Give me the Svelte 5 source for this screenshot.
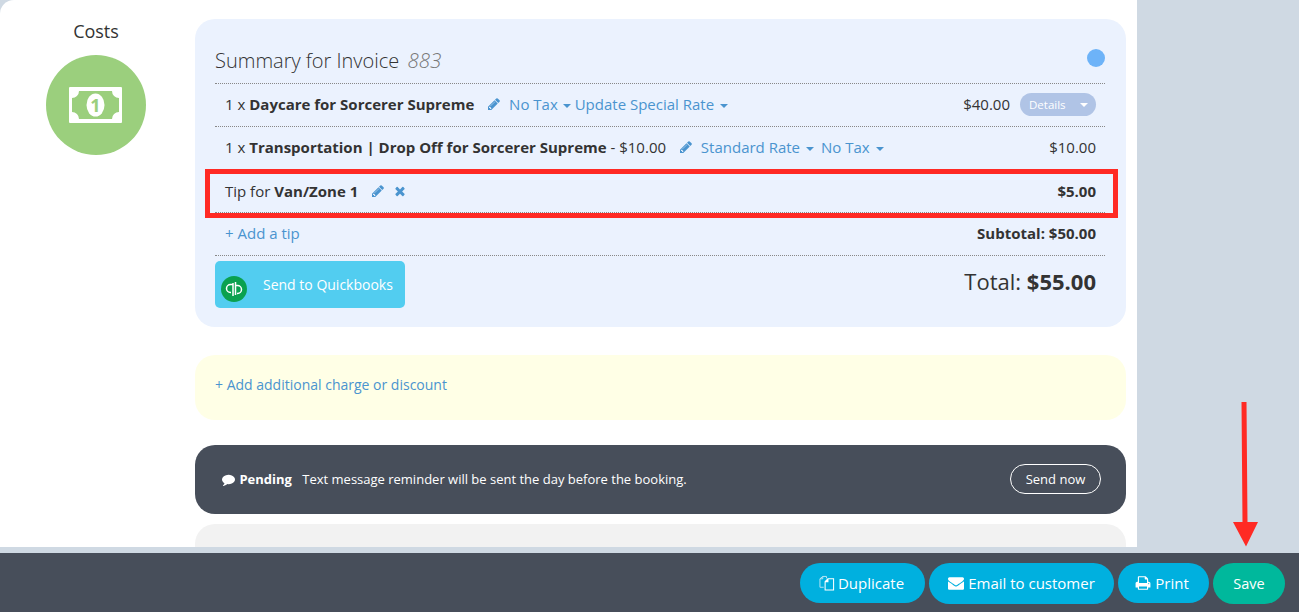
<script>
  const pencil = "M491 1536l91-91-235-235-91 91v107h128v128h107zm523-928q0-22-22-22-10 0-17 7l-542 542q-7 7-7 17 0 22 22 22 10 0 17-7l542-542q7-7 7-17zm-54-192l416 416-832 832h-416v-416zm683 96q0 53-37 90l-166 166-416-416 166-165q36-38 90-38 53 0 91 38l235 234q37 39 37 91z";
  const times = "M1490 1322q0 40-28 68l-136 136q-28 28-68 28t-68-28l-294-294-294 294q-28 28-68 28t-68-28l-136-136q-28-28-28-68t28-68l294-294-294-294q-28-28-28-68t28-68l136-136q28-28 68-28t68 28l294 294 294-294q28-28 68-28t68 28l136 136q28 28 28 68t-28 68l-294 294 294 294q28 28 28 68z";
  const envelope = "M1792 710v794q0 66-47 113t-113 47h-1472q-66 0-113-47t-47-113v-794q44 49 101 87 362 246 497 345 57 42 92.500 65.500t94.500 48 110 24.500h2q51 0 110-24.500t94.500-48 92.500-65.500q170-123 498-345 57-39 100-87zm0-294q0 79-49 151t-122 123q-376 261-468 325-10 7-42.500 30.500t-54 38-52 32.500-57.500 27-50 9h-2q-23 0-50-9t-57.500-27-52-32.500-54-38-42.500-30.500q-91-64-262-182.500t-205-142.500q-62-42-117-115.500t-55-136.500q0-78 41.500-130t118.500-52h1472q65 0 112.500 47t47.500 113z";
  const printer = "M448 1536h896v-256h-896v256zm0-640h896v-384h-160q-40 0-68-28t-28-68v-160h-640v640zm1152 64q0-26-19-45t-45-19-45 19-19 45 19 45 45 19 45-19 19-45zm128 0v416q0 13-9.500 22.500t-22.500 9.500h-224v160q0 40-28 68t-68 28h-960q-40 0-68-28t-28-68v-160h-224q-13 0-22.500-9.500t-9.500-22.500v-416q0-79 56.500-135.500t135.500-56.500h64v-544q0-40 28-68t68-28h672q40 0 88 20t76 48l152 152q28 28 48 76t20 88v256h64q79 0 135.500 56.500t56.500 135.500z";
  const comment = "M1792 896q0 174-120 321.500t-326 233-450 85.500q-70 0-145-8-198 175-460 242-49 14-114 22-17 2-30.500-9t-17.500-29v-1q-3-4-.5-12t2-10 4.500-9.500l6-9 7-8.500 8-9q7-8 31-34.500t34.500-38 31-39.500 32.500-51 27-59 26-76q-157-89-247.500-220t-90.500-281q0-130 71-248.500t191-204.500 286-136.500 348-50.500q244 0 450 85.500t326 233 120 321.500z";
</script>

<div class="page">
  <div class="panel">
    <aside class="side">
      <h3>Costs</h3>
      <div class="money">
        <svg width="53" height="36" viewBox="0 0 53 36">
          <rect width="53" height="36" rx="1" fill="#fff" />
          <path d="M10 4H43A7 7 0 0 0 50 11V25A7 7 0 0 0 43 32H10A7 7 0 0 0 3 25V11A7 7 0 0 0 10 4Z" fill="#9bcf7d" />
          <ellipse cx="26.500" cy="18" rx="9" ry="11.500" fill="#fff" />
          <text x="26.500" y="24.500" text-anchor="middle" class="one">1</text>
        </svg>
      </div>
    </aside>

    <main class="content">
      <section class="summary">
        <div class="title">
          <h2>Summary for Invoice <em>883</em></h2>
          <span class="dot"></span>
        </div>

        <div class="row">
          <div>
            1 x <b>Daycare for Sorcerer Supreme</b>
            <svg class="ico pen" viewBox="0 0 1792 1792"><path d={pencil} /></svg>
            <a class="link">No Tax<i class="caret"></i></a>
            <a class="link">Update Special Rate<i class="caret wide"></i></a>
          </div>
          <div class="right">
            $40.00
            <span class="details">Details<i class="caret white"></i></span>
          </div>
        </div>

        <div class="row">
          <div>
            1 x <b>Transportation | Drop Off for Sorcerer Supreme</b> - $10.00
            <svg class="ico pen" viewBox="0 0 1792 1792"><path d={pencil} /></svg>
            <a class="link">Standard Rate<i class="caret wide gap"></i></a>
            <a class="link">No Tax<i class="caret wide"></i></a>
          </div>
          <div class="right">$10.00</div>
        </div>

        <div class="row tip-row">
          <div>
            Tip for <b>Van/Zone 1</b>
            <svg class="ico pen tip" viewBox="0 0 1792 1792"><path d={pencil} /></svg>
            <svg class="ico cross" viewBox="0 0 1792 1792"><path d={times} /></svg>
          </div>
          <div class="right"><b>$5.00</b></div>
        </div>

        <div class="row">
          <a class="link">+ Add a tip</a>
          <div class="right"><b>Subtotal: $50.00</b></div>
        </div>

        <div class="bottom">
          <button class="qb">
            <svg class="qb-logo" width="26" height="26" viewBox="0 0 26 26">
              <circle cx="13" cy="13" r="13" fill="#0aa14f" />
              <path d="M12 7V20M12 8.500H9.500A4 4 0 0 0 9.500 16.500H10M14.500 19V6M14.500 9.500H16.500A4 4 0 0 1 16.500 17.500H16" fill="none" stroke="#fff" stroke-width="1.500" />
            </svg>
            Send to Quickbooks
          </button>
          <div class="total">Total: <b>$55.00</b></div>
        </div>
      </section>

      <section class="charge">
        <a class="link">+ Add additional charge or discount</a>
      </section>

      <section class="reminder">
        <div class="msg">
          <svg class="bubble" viewBox="0 0 1792 1792"><path d={comment} /></svg>
          <b>Pending</b>
          <span>Text message reminder will be sent the day before the booking.</span>
        </div>
        <button class="send">Send now</button>
      </section>

      <section class="gray"></section>
    </main>
  </div>

  <footer class="bar">
    <button class="pill dup">
      <svg class="files" width="16" height="17" viewBox="0 0 17 17" fill="none">
        <path d="M1 3.500L4 1H8V3M1 3.500V12.500H5M1 3.500H4V1" stroke="#bfe6f5" stroke-width="1" />
        <path d="M6.500 6.500L9.500 3.500H15.500V15.500H6.500ZM6.500 6.500H9.500V3.500" stroke="#fff" stroke-width="1.100" />
      </svg>
      Duplicate
    </button>
    <button class="pill email">
      <svg width="16" height="16" viewBox="0 0 1792 1792" fill="#fff"><path d={envelope} /></svg>
      Email to customer
    </button>
    <button class="pill print">
      <svg width="16" height="16" viewBox="0 0 1792 1792" fill="#fff"><path d={printer} /></svg>
      Print
    </button>
    <button class="pill save">Save</button>
  </footer>

  <!-- annotation marks on top of the screenshot -->
  <div class="redbox"></div>
  <svg class="arrow" width="27" height="146" viewBox="0 0 27 146">
    <path d="M9.500 0H14.500L15.500 120H26L14 144.500L1 120H10.500Z" fill="#ff2a24" />
  </svg>
</div>

<style>
  :global(body) {
    margin: 0;
    background: #cfd9e3;
    font-family: "Open Sans", "Liberation Sans", sans-serif;
    color: #333;
  }

  .page {
    position: relative;
    height: 612px;
    width: 1299px;
    display: flex;
    flex-direction: column;
    overflow: hidden;
    background: #cfd9e3;
  }

  .panel {
    width: 1137px;
    height: 547px;
    flex: none;
    display: flex;
    background: #fff;
    border-top-left-radius: 14px;
    overflow: hidden;
  }

  .side {
    width: 192px;
    margin-right: 3px;
    flex: none;
    display: flex;
    flex-direction: column;
    align-items: center;
    padding-top: 19px;
  }

  .side h3 {
    margin: 0 0 11px;
    font-size: 18px;
    line-height: 25px;
    font-weight: 400;
  }

  .money {
    width: 100px;
    height: 100px;
    border-radius: 50%;
    background: #9bcf7d;
    display: flex;
    align-items: center;
    justify-content: center;
  }

  .money svg {
    margin-right: 1px;
  }

  .one {
    font-size: 18px;
    font-weight: 700;
    fill: #9bcf7d;
  }

  .content {
    width: 931px;
    padding-top: 19px;
  }

  .summary {
    box-sizing: border-box;
    height: 308px;
    background: #ebf2fe;
    border-radius: 20px;
    padding: 25px 21px 0 20px;
  }

  .title {
    display: flex;
    justify-content: space-between;
    height: 39px;
    border-bottom: 1px dotted #888;
  }

  .title h2 {
    margin: 2px 0 0;
    font-size: 20px;
    line-height: 28px;
    font-weight: 300;
  }

  .title em {
    color: #777;
    margin-left: 3px;
    font-size: 20.500px;
  }

  .dot {
    width: 18px;
    height: 18px;
    border-radius: 50%;
    background: #6db3f8;
    margin-top: 5px;
  }

  .row {
    box-sizing: border-box;
    height: 43px;
    display: flex;
    align-items: center;
    justify-content: space-between;
    padding: 0 9px 2px 10px;
    border-bottom: 1px dotted #888;
    font-size: 15px;
  }

  .row.tip-row {
    padding-bottom: 0;
  }

  .row b {
    font-weight: 700;
  }

  .link {
    color: #4a94cf;
    font-size: 15px;
    cursor: pointer;
  }

  .charge .link {
    font-size: 14px;
  }

  .ico {
    width: 14px;
    height: 14px;
    fill: #4a94cf;
    vertical-align: -1px;
  }

  .pen {
    margin: 0 4px 0 9px;
  }

  .pen.tip {
    margin: 0 3px 0 9px;
  }

  .cross {
    margin-left: 1px;
  }

  .caret {
    display: inline-block;
    width: 0;
    height: 0;
    margin-left: 5px;
    vertical-align: 2px;
    border: 4px solid transparent;
    border-bottom: 0;
    border-top-color: #4a94cf;
  }

  .caret.wide {
    margin-left: 6px;
  }

  .caret.gap {
    margin-right: 3px;
  }

  .caret.white {
    border-top-color: #fff;
    margin-left: 14px;
  }

  .right {
    display: flex;
    align-items: center;
  }

  .details {
    margin-left: 10px;
    width: 76px;
    height: 23px;
    box-sizing: border-box;
    padding-left: 9px;
    border-radius: 12px;
    background: #b0c4e6;
    color: #fff;
    font-size: 11.500px;
    line-height: 23px;
  }

  .bottom {
    display: flex;
    justify-content: space-between;
    align-items: flex-start;
    padding-top: 5px;
  }

  button {
    font-family: inherit;
    border: 0;
    cursor: pointer;
  }

  .qb {
    position: relative;
    width: 190px;
    height: 47px;
    padding: 0 0 0 48px;
    text-align: left;
    background: #52cdf0;
    color: #fff;
    font-size: 14px;
    border-radius: 5px;
  }

  .qb-logo {
    position: absolute;
    left: 6px;
    top: 15px;
  }

  .total {
    padding: 5px 9px 0 0;
    font-size: 22px;
    line-height: 30px;
  }

  .charge {
    box-sizing: border-box;
    height: 65px;
    margin-top: 28px;
    background: #ffffe6;
    border-radius: 20px;
    padding: 18px 20px;
  }

  .reminder {
    box-sizing: border-box;
    height: 69px;
    margin-top: 25px;
    background: #474e5a;
    border-radius: 20px;
    padding: 0 25px 0 27px;
    color: #fff;
    display: flex;
    align-items: center;
    justify-content: space-between;
    font-size: 13px;
  }

  .msg {
    margin-bottom: 2px;
  }

  .msg span {
    margin-left: 7px;
  }

  .bubble {
    width: 13px;
    height: 13px;
    fill: #fff;
    vertical-align: -2px;
    margin-right: 1px;
  }

  .send {
    width: 91px;
    height: 30px;
    margin-bottom: 1px;
    padding: 0;
    border: 1px solid #fff;
    border-radius: 15px;
    background: transparent;
    color: #fff;
    font-size: 13px;
  }

  .gray {
    height: 60px;
    margin-top: 10px;
    background: #f2f2f2;
    border-radius: 20px;
  }

  .bar {
    box-sizing: border-box;
    height: 59px;
    margin-top: 6px;
    flex: none;
    background: #474e5a;
    display: flex;
    justify-content: flex-end;
    align-items: flex-start;
    gap: 4px;
    padding: 10px 14px 0 0;
  }

  .pill {
    height: 41px;
    padding: 0 0 1px;
    border-radius: 21px;
    background: #00b0df;
    color: #fff;
    font-size: 15px;
    display: flex;
    align-items: center;
    justify-content: center;
    gap: 4px;
  }

  .dup { width: 125px; height: 40px; padding: 0 2px 0 0; gap: 3px; }
  .email { width: 185px; }
  .print { width: 91px; height: 40px; padding: 0 3px 0 0; gap: 4px; }
  .save { width: 72px; background: #00b89c; font-size: 14.500px; }

  .redbox {
    position: absolute;
    left: 205px;
    top: 169px;
    width: 913px;
    height: 49px;
    box-sizing: border-box;
    border: 5px solid #ff2a24;
  }

  .arrow {
    position: absolute;
    left: 1232px;
    top: 402px;
  }
</style>
